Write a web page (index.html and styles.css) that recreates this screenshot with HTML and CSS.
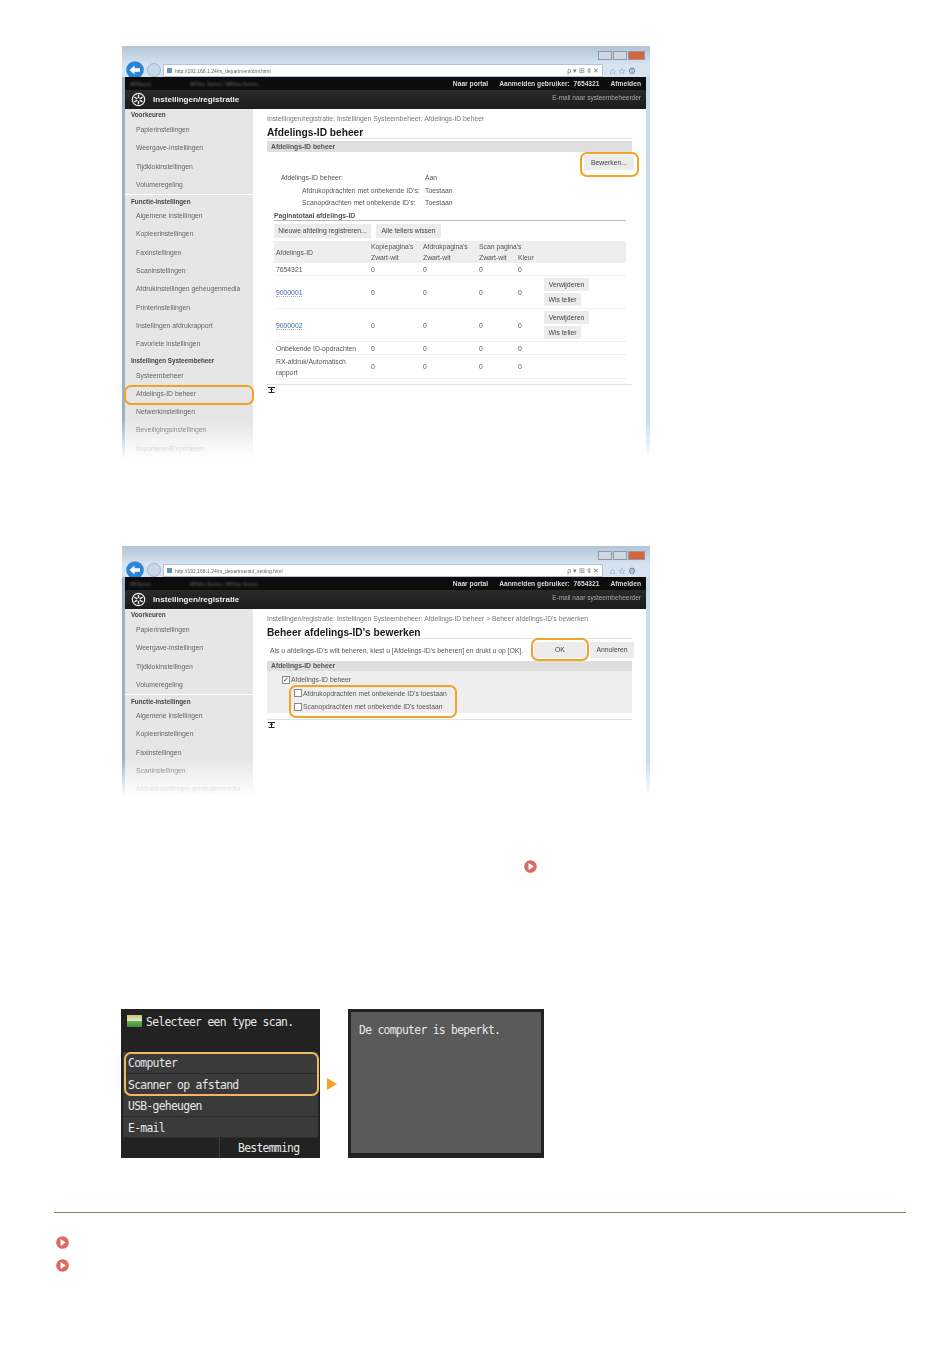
FILE: index.html
```html
<!DOCTYPE html>
<html lang="nl">
<head>
  <meta charset="UTF-8" />
  <title>Afdelings-ID beheer</title>
  <link rel="stylesheet" href="styles.css">
</head>
<body>

  <svg class="defs" width="0" height="0">
    <symbol id="play" viewBox="0 0 14 14">
      <circle cx="7" cy="7" r="6.8" fill="#d96b60"/>
      <path d="M4.9 3.3 L10.6 7 L4.9 10.7 Z" fill="#fff"/>
    </symbol>
    <symbol id="back" viewBox="0 0 18 18">
      <circle cx="9" cy="9" r="8.8" fill="#2a86d6"/>
      <path d="M3.5 9 L8.5 4.6 V7.2 H14 V10.8 H8.5 V13.4 Z" fill="#fff"/>
    </symbol>
    <symbol id="gear" viewBox="0 0 16 16">
      <circle cx="8" cy="8" r="6.6" fill="none" stroke="#eee" stroke-width="1.3"/>
      <path d="M8 3 V13 M3.6 5.5 L12.4 10.5 M3.6 10.5 L12.4 5.5" stroke="#eee" stroke-width="1.5"/>
      <circle cx="8" cy="8" r="1.6" fill="#222"/>
    </symbol>
    <symbol id="totop" viewBox="0 0 7 6">
      <path d="M0 0.5 H7 M0.5 5.5 H6.5 M3.5 0.5 V5.5" stroke="#222" stroke-width="1"/>
      <path d="M1.5 3 L3.5 1 L5.5 3 Z" fill="#222"/>
    </symbol>
  </svg>

  <!-- Scherm 1 -->
  <div class="window window-first">
    <div class="titlebar">
      <span class="winbtn"></span><span class="winbtn"></span><span class="winbtn winbtn-close"></span>
    </div>
    <div class="addressbar">
      <svg class="nav-back"><use href="#back"/></svg>
      <span class="nav-forward"></span>
      <div class="urlbox">
        <span class="favicon"></span>
        <span class="url">http://192.168.1.24/rs_department/dmi.html</span>
        <span class="urltools">ρ ▾ ⊞ ¢ ✕</span>
      </div>
      <span class="browsertools">⌂ ☆ ⚙</span>
    </div>
    <div class="topstrip">
      <span class="device">MF8xxxx</span>
      <span class="device device-name">MF8xx Series / MF8xx Series</span>
      <span class="topstrip-right">
        <span>Naar portal</span>
        <span>Aanmelden gebruiker: &nbsp;7654321</span>
        <span>Afmelden</span>
      </span>
    </div>
    <div class="appbar">
      <svg class="gear"><use href="#gear"/></svg>
      <span class="apptitle">Instellingen/registratie</span>
      <span class="mailadmin">E-mail naar systeembeheerder</span>
    </div>
    <div class="screen">
      <div class="sidebar">
        <div class="side-head">Voorkeuren</div>
        <div class="side-item">Papierinstellingen</div>
        <div class="side-item">Weergave-instellingen</div>
        <div class="side-item">Tijdklokinstellingen</div>
        <div class="side-item">Volumeregeling</div>
        <div class="side-head side-head-line">Functie-instellingen</div>
        <div class="side-item">Algemene instellingen</div>
        <div class="side-item">Kopieerinstellingen</div>
        <div class="side-item">Faxinstellingen</div>
        <div class="side-item">Scaninstellingen</div>
        <div class="side-item">Afdrukinstellingen geheugenmedia</div>
        <div class="side-item">Printerinstellingen</div>
        <div class="side-item">Instellingen afdrukrapport</div>
        <div class="side-item">Favoriete instellingen</div>
        <div class="side-head">Instellingen Systeembeheer</div>
        <div class="side-item">Systeembeheer</div>
        <div class="side-item">Afdelings-ID beheer</div>
        <div class="side-item">Netwerkinstellingen</div>
        <div class="side-item">Beveiligingsinstellingen</div>
        <div class="side-item">Importeren/Exporteren</div>
      </div>
      <div class="content">
        <div class="crumb">Instellingen/registratie: Instellingen Systeembeheer: Afdelings-ID beheer</div>
        <h1 class="pagetitle">Afdelings-ID beheer</h1>
        <div class="sectionbar">Afdelings-ID beheer</div>
        <div class="editrow"><span class="btn btn-edit">Bewerken...</span></div>
        <div class="info info-main"><span>Afdelings-ID beheer:</span><span>Aan</span></div>
        <div class="info info-sub"><span>Afdrukopdrachten met onbekende ID's:</span><span>Toestaan</span></div>
        <div class="info info-sub"><span>Scanopdrachten met onbekende ID's:</span><span>Toestaan</span></div>
        <div class="subhead">Paginatotaal afdelings-ID</div>
        <div class="btnrow">
          <span class="btn btn-new">Nieuwe afdeling registreren...</span>
          <span class="btn btn-clear">Alle tellers wissen</span>
        </div>
        <table class="counts">
          <colgroup>
            <col class="c1"><col class="c2"><col class="c3"><col class="c4"><col class="c5"><col>
          </colgroup>
          <thead>
            <tr>
              <th>Afdelings-ID</th>
              <th>Kopiepagina's<br>Zwart-wit</th>
              <th>Afdrukpagina's<br>Zwart-wit</th>
              <th>Scan pagina's<br>Zwart-wit</th>
              <th><br>Kleur</th>
              <th></th>
            </tr>
          </thead>
          <tbody>
            <tr class="row-plain"><td>7654321</td><td>0</td><td>0</td><td>0</td><td>0</td><td></td></tr>
            <tr class="row-actions">
              <td><span class="idlink">9000001</span></td><td>0</td><td>0</td><td>0</td><td>0</td>
              <td><span class="btn btn-del">Verwijderen</span><span class="btn btn-wis">Wis teller</span></td>
            </tr>
            <tr class="row-actions">
              <td><span class="idlink">9000002</span></td><td>0</td><td>0</td><td>0</td><td>0</td>
              <td><span class="btn btn-del">Verwijderen</span><span class="btn btn-wis">Wis teller</span></td>
            </tr>
            <tr class="row-plain"><td>Onbekende ID-opdrachten</td><td>0</td><td>0</td><td>0</td><td>0</td><td></td></tr>
            <tr class="row-tall"><td>RX-afdruk/Automatisch<br>rapport</td><td>0</td><td>0</td><td>0</td><td>0</td><td></td></tr>
          </tbody>
        </table>
        <div class="endline"></div>
        <svg class="totop"><use href="#totop"/></svg>
      </div>
    </div>
    <div class="ring ring-edit"></div>
    <div class="ring ring-side"></div>
    <div class="fade"></div>
  </div>

  <!-- Scherm 2 -->
  <div class="window window-second">
    <div class="titlebar">
      <span class="winbtn"></span><span class="winbtn"></span><span class="winbtn winbtn-close"></span>
    </div>
    <div class="addressbar">
      <svg class="nav-back"><use href="#back"/></svg>
      <span class="nav-forward"></span>
      <div class="urlbox">
        <span class="favicon"></span>
        <span class="url">http://192.168.1.24/rs_departmentid_setting.html</span>
        <span class="urltools">ρ ▾ ⊞ ¢ ✕</span>
      </div>
      <span class="browsertools">⌂ ☆ ⚙</span>
    </div>
    <div class="topstrip">
      <span class="device">MF8xxxx</span>
      <span class="device device-name">MF8xx Series / MF8xx Series</span>
      <span class="topstrip-right">
        <span>Naar portal</span>
        <span>Aanmelden gebruiker: &nbsp;7654321</span>
        <span>Afmelden</span>
      </span>
    </div>
    <div class="appbar">
      <svg class="gear"><use href="#gear"/></svg>
      <span class="apptitle">Instellingen/registratie</span>
      <span class="mailadmin">E-mail naar systeembeheerder</span>
    </div>
    <div class="screen">
      <div class="sidebar">
        <div class="side-head">Voorkeuren</div>
        <div class="side-item">Papierinstellingen</div>
        <div class="side-item">Weergave-instellingen</div>
        <div class="side-item">Tijdklokinstellingen</div>
        <div class="side-item">Volumeregeling</div>
        <div class="side-head side-head-line">Functie-instellingen</div>
        <div class="side-item">Algemene instellingen</div>
        <div class="side-item">Kopieerinstellingen</div>
        <div class="side-item">Faxinstellingen</div>
        <div class="side-item">Scaninstellingen</div>
        <div class="side-item">Afdrukinstellingen geheugenmedia</div>
      </div>
      <div class="content">
        <div class="crumb">Instellingen/registratie: Instellingen Systeembeheer: Afdelings-ID beheer &gt; Beheer afdelings-ID's bewerken</div>
        <h1 class="pagetitle">Beheer afdelings-ID's bewerken</h1>
        <div class="introrow">
          <span class="intro">Als u afdelings-ID's wilt beheren, kiest u [Afdelings-ID's beheren] en drukt u op [OK].</span>
          <span class="btn btn-ok">OK</span>
          <span class="btn btn-cancel">Annuleren</span>
        </div>
        <div class="sectionbar sectionbar-tight">Afdelings-ID beheer</div>
        <div class="panel">
          <div class="check check-main"><span class="box box-on">✓</span>Afdelings-ID beheer</div>
          <div class="check check-sub"><span class="box"></span>Afdrukopdrachten met onbekende ID's toestaan</div>
          <div class="check check-sub"><span class="box"></span>Scanopdrachten met onbekende ID's toestaan</div>
        </div>
        <div class="endline endline-panel"></div>
        <svg class="totop"><use href="#totop"/></svg>
      </div>
    </div>
    <div class="ring ring-ok"></div>
    <div class="ring ring-checks"></div>
    <div class="fade"></div>
  </div>

  <div class="note"><svg class="play"><use href="#play"/></svg></div>

  <div class="panels">
    <div class="lcd lcd-list">
      <div class="lcd-title"><span class="scan-icon"></span>Selecteer een type scan.</div>
      <div class="lcd-rows">
        <div class="lcd-row">Computer</div>
        <div class="lcd-row">Scanner op afstand</div>
        <div class="lcd-row">USB-geheugen</div>
        <div class="lcd-row">E-mail</div>
      </div>
      <div class="lcd-foot"><span class="lcd-foot-btn">Bestemming</span></div>
      <div class="ring ring-lcd"></div>
    </div>
    <span class="next-arrow"></span>
    <div class="lcd lcd-message">
      <div class="lcd-inner">De computer is beperkt.</div>
    </div>
  </div>

  <div class="related">
    <div class="related-item"><svg class="play"><use href="#play"/></svg></div>
    <div class="related-item"><svg class="play"><use href="#play"/></svg></div>
  </div>

</body>
</html>
```

FILE: styles.css
```css
body {
  margin: 0;
  background: #fff;
  font-family: "Liberation Sans", Arial, sans-serif;
  color: #333;
}

.defs {
  position: absolute;
}

/* browser window */
.window {
  position: relative;
  width: 528px;
  margin-left: 122px;
  overflow: hidden;
  background: linear-gradient(90deg, #9db2c8 3px, #c6dcee 3px);
  box-shadow: inset 0 1px 0 #9a9a9a;
}

.window > *:not(.ring):not(.fade) {
  filter: blur(0.4px);
}

.window-first {
  height: 416px;
  margin-top: 46px;
}

.window-second {
  height: 254px;
  margin-top: 84px;
}

.titlebar {
  height: 18px;
  padding: 5px 5px 0 0;
  box-sizing: border-box;
  display: flex;
  justify-content: flex-end;
  gap: 1px;
  background: linear-gradient(#b4c4d6, #d4e2f0);
}

.winbtn {
  width: 14px;
  height: 9px;
  background: #cfd8e2;
  border: 1px solid #8e9aa6;
  box-sizing: border-box;
}

.winbtn-close {
  background: #d8643c;
  width: 17px;
}

.addressbar {
  height: 13px;
  display: flex;
  align-items: center;
  background: #d6e4f1;
  position: relative;
  padding-left: 41px;
}

.nav-back {
  position: absolute;
  left: 4px;
  top: -3px;
  width: 18px;
  height: 18px;
}

.nav-forward {
  position: absolute;
  left: 25px;
  top: -1px;
  width: 12px;
  height: 12px;
  border-radius: 50%;
  background: #c9d9e8;
  border: 1px solid #9fb4c8;
}

.urlbox {
  width: 440px;
  height: 13px;
  background: #fff;
  border: 1px solid #b5c4d2;
  box-sizing: border-box;
  display: flex;
  align-items: center;
  padding: 0 3px 0 3px;
  font-size: 5px;
  color: #666;
}

.favicon {
  width: 5px;
  height: 5px;
  background: #5f95c9;
  margin-right: 3px;
}

.url {
  flex: 1;
}

.urltools {
  font-size: 7px;
  color: #777;
}

.browsertools {
  margin-left: 7px;
  font-size: 9px;
  color: #6c7c8c;
  white-space: nowrap;
}

.topstrip {
  height: 13px;
  margin: 0 4px 0 3px;
  background: #0c0c0c;
  display: flex;
  align-items: center;
  padding: 0 5px;
  font-size: 6.7px;
  font-weight: bold;
  color: #d8d8d8;
}

.device {
  width: 60px;
  color: #555;
  font-size: 5px;
  filter: blur(1px);
}

.device-name {
  width: auto;
}

.topstrip-right {
  margin-left: auto;
  display: flex;
  gap: 11px;
}

.appbar {
  height: 19px;
  margin: 0 4px 0 3px;
  background: linear-gradient(#2a2a2a, #1c1c1c);
  display: flex;
  align-items: center;
  padding: 0 5px 0 6px;
  color: #eee;
}

.gear {
  width: 15px;
  height: 15px;
  margin-right: 7px;
}

.apptitle {
  font-size: 8.1px;
  font-weight: bold;
}

.mailadmin {
  margin-left: auto;
  margin-bottom: 4px;
  font-size: 6.5px;
  color: #aaa;
}

.screen {
  display: flex;
  margin: 0 4px 0 3px;
  background: #fff;
  height: 400px;
}

/* left menu */
.sidebar {
  width: 128px;
  flex: none;
  background: #e6e6e6;
}

.side-head {
  height: 13px;
  line-height: 13px;
  padding-left: 6px;
  font-size: 6.3px;
  font-weight: bold;
  color: #444;
}

.side-head:first-child {
  height: 12px;
  line-height: 12px;
}

.side-head-line {
  border-top: 1px solid #fff;
  box-sizing: border-box;
}

.side-item {
  height: 18.3px;
  line-height: 18.3px;
  padding-left: 11px;
  font-size: 6.8px;
  color: #666;
  white-space: nowrap;
}

/* main part */
.content {
  flex: 1;
  padding: 5px 14px 0 14px;
  font-size: 6.8px;
  color: #555;
}

.crumb {
  height: 10px;
  line-height: 10px;
  color: #777;
  white-space: nowrap;
}

.pagetitle {
  margin: 1px 0 0;
  height: 13px;
  line-height: 15px;
  font-size: 10.2px;
  font-weight: bold;
  color: #1a1a1a;
  border-bottom: 1px solid #e4e4e4;
  box-sizing: content-box;
  width: 365px;
}

.sectionbar {
  margin-top: 2px;
  height: 11px;
  line-height: 11px;
  width: 365px;
  padding-left: 4px;
  box-sizing: border-box;
  background: #dedede;
  font-weight: bold;
  color: #555;
}

.sectionbar-tight {
  margin-top: 0;
  height: 10px;
  line-height: 10px;
}

.btn {
  display: inline-block;
  background: #ececec;
  color: #444;
  text-align: center;
  white-space: nowrap;
}

.editrow {
  width: 367px;
  height: 17px;
  margin-top: 3px;
  display: flex;
  justify-content: flex-end;
}

.btn-edit {
  width: 50px;
  height: 15px;
  line-height: 15px;
}

.info {
  display: grid;
  height: 12.5px;
  line-height: 12.5px;
}

.info-main {
  grid-template-columns: 144px 1fr;
  padding-left: 14px;
}

.info-sub {
  grid-template-columns: 123px 1fr;
  padding-left: 35px;
}

.subhead {
  margin: 0 0 0 7px;
  width: 352px;
  height: 10.5px;
  line-height: 12px;
  font-weight: bold;
  border-bottom: 1.5px solid #bbb;
}

.btnrow {
  display: flex;
  gap: 5px;
  margin: 3px 0 0 7px;
}

.btn-new {
  width: 97px;
  height: 14px;
  line-height: 14px;
}

.btn-clear {
  width: 65px;
  height: 14px;
  line-height: 14px;
}

.counts {
  margin: 3px 0 0 7px;
  width: 352px;
  table-layout: fixed;
  border-collapse: collapse;
}

.c1 { width: 95px; }
.c2 { width: 52px; }
.c3 { width: 56px; }
.c4 { width: 39px; }
.c5 { width: 26px; }

.counts th {
  height: 22px;
  padding: 0 0 0 2px;
  background: #eee;
  font-weight: normal;
  line-height: 11px;
  text-align: left;
  white-space: nowrap;
}

.counts td {
  padding: 0 0 0 2px;
  line-height: 11px;
  border-bottom: 1px solid #f0f0f0;
}

.row-plain td { height: 12px; }
.row-actions td { height: 32px; }
.row-tall td { height: 23px; }

.idlink {
  color: #3d6aa8;
  border-bottom: 1px dotted #aab;
}

.btn-del,
.btn-wis {
  display: block;
  height: 13px;
  line-height: 13px;
}

.btn-del {
  width: 45px;
  margin-bottom: 2px;
}

.btn-wis {
  width: 37px;
}

.endline {
  width: 365px;
  margin-top: 5px;
  border-top: 1px solid #e2e2e2;
}

.endline-panel {
  margin-top: 6px;
}

.totop {
  display: block;
  margin: 2px 0 0 1px;
  width: 7px;
  height: 6px;
}

/* second screen */
.introrow {
  width: 367px;
  height: 22px;
  display: flex;
  align-items: center;
}

.intro {
  padding-left: 3px;
  white-space: nowrap;
  width: 264px;
}

.btn-ok {
  width: 52px;
  height: 16px;
  line-height: 16px;
}

.btn-cancel {
  width: 44px;
  height: 16px;
  line-height: 16px;
  margin-left: 4px;
}

.panel {
  width: 365px;
  height: 42px;
  background: #eee;
  padding-top: 2px;
  box-sizing: border-box;
}

.check {
  display: flex;
  align-items: center;
  height: 13.5px;
  white-space: nowrap;
}

.check-main {
  padding-left: 15px;
}

.check-sub {
  padding-left: 27px;
}

.box {
  width: 6px;
  height: 6px;
  margin-right: 1px;
  background: #fff;
  border: 1px solid #888;
  font-size: 7px;
  line-height: 6px;
  color: #333;
}

/* orange highlight rings, over the shot */
.ring {
  position: absolute;
  border: 2.5px solid #f0a326;
  border-radius: 7px;
  box-sizing: border-box;
}

.ring-edit {
  left: 458px;
  top: 106px;
  width: 59px;
  height: 25px;
}

.ring-side {
  left: 2px;
  top: 339px;
  width: 130px;
  height: 20px;
}

.ring-ok {
  left: 409px;
  top: 92px;
  width: 58px;
  height: 23px;
}

.ring-checks {
  left: 167px;
  top: 139px;
  width: 168px;
  height: 33px;
}

.ring-lcd {
  left: 3px;
  top: 43px;
  width: 195px;
  height: 44px;
  border: 2px solid #f2b860;
}

.fade {
  position: absolute;
  left: 0;
  right: 0;
  bottom: 0;
  height: 42px;
  background: linear-gradient(rgba(255, 255, 255, 0), #fff 92%);
}

/* link with play icon */
.play {
  display: block;
  width: 13px;
  height: 13px;
}

.note {
  margin: 60px 0 0 524px;
  height: 13px;
}

/* operation panel */
.panels {
  display: flex;
  align-items: center;
  margin: 136px 0 0 121px;
  font-family: "DejaVu Sans Mono", monospace;
}

.lcd {
  position: relative;
  height: 149px;
  box-sizing: border-box;
  background: #222;
  color: #e8e8e8;
  font-size: 11.4px;
  letter-spacing: -0.72px;
}

.lcd-list {
  width: 199px;
  padding: 0 2px;
  display: flex;
  flex-direction: column;
}

.lcd-title {
  height: 26px;
  padding-left: 4px;
  box-sizing: border-box;
  display: flex;
  align-items: center;
  align-self: flex-start;
  margin-bottom: 17px;
  white-space: nowrap;
}

.scan-icon {
  width: 15px;
  height: 12px;
  margin: -3px 4px 0 0;
  background: linear-gradient(#c8c26a, #e8e8d0 45%, #5cb04a 55%, #3f8f3a);
}

.lcd-rows {
  flex: 1;
}

.lcd-row {
  height: 21.5px;
  line-height: 22px;
  padding-left: 5px;
  background: #3a3a3a;
  border-bottom: 1px solid #2a2a2a;
  box-sizing: border-box;
}

.lcd-foot {
  height: 20px;
  margin: 0 -2px;
  display: flex;
  justify-content: flex-end;
  background: #222;
}

.lcd-foot-btn {
  width: 101px;
  padding-left: 18px;
  box-sizing: border-box;
  line-height: 20px;
  border-left: 1px solid #3a3a3a;
  white-space: nowrap;
}

.next-arrow {
  width: 0;
  height: 0;
  margin: 0 11px 0 7px;
  border-left: 10px solid #f0a326;
  border-top: 6px solid transparent;
  border-bottom: 6px solid transparent;
}

.lcd-message {
  width: 196px;
  padding: 3px;
}

.lcd-inner {
  height: 141px;
  padding: 11px 8px;
  box-sizing: border-box;
  background: #5a5a5a;
}

/* related links */
.related {
  margin: 54px 44px 0 54px;
  border-top: 1px solid #6f8f5f;
  padding-top: 23px;
  display: flex;
  flex-direction: column;
  gap: 10px;
}

.related-item {
  margin-left: 2px;
}
```
